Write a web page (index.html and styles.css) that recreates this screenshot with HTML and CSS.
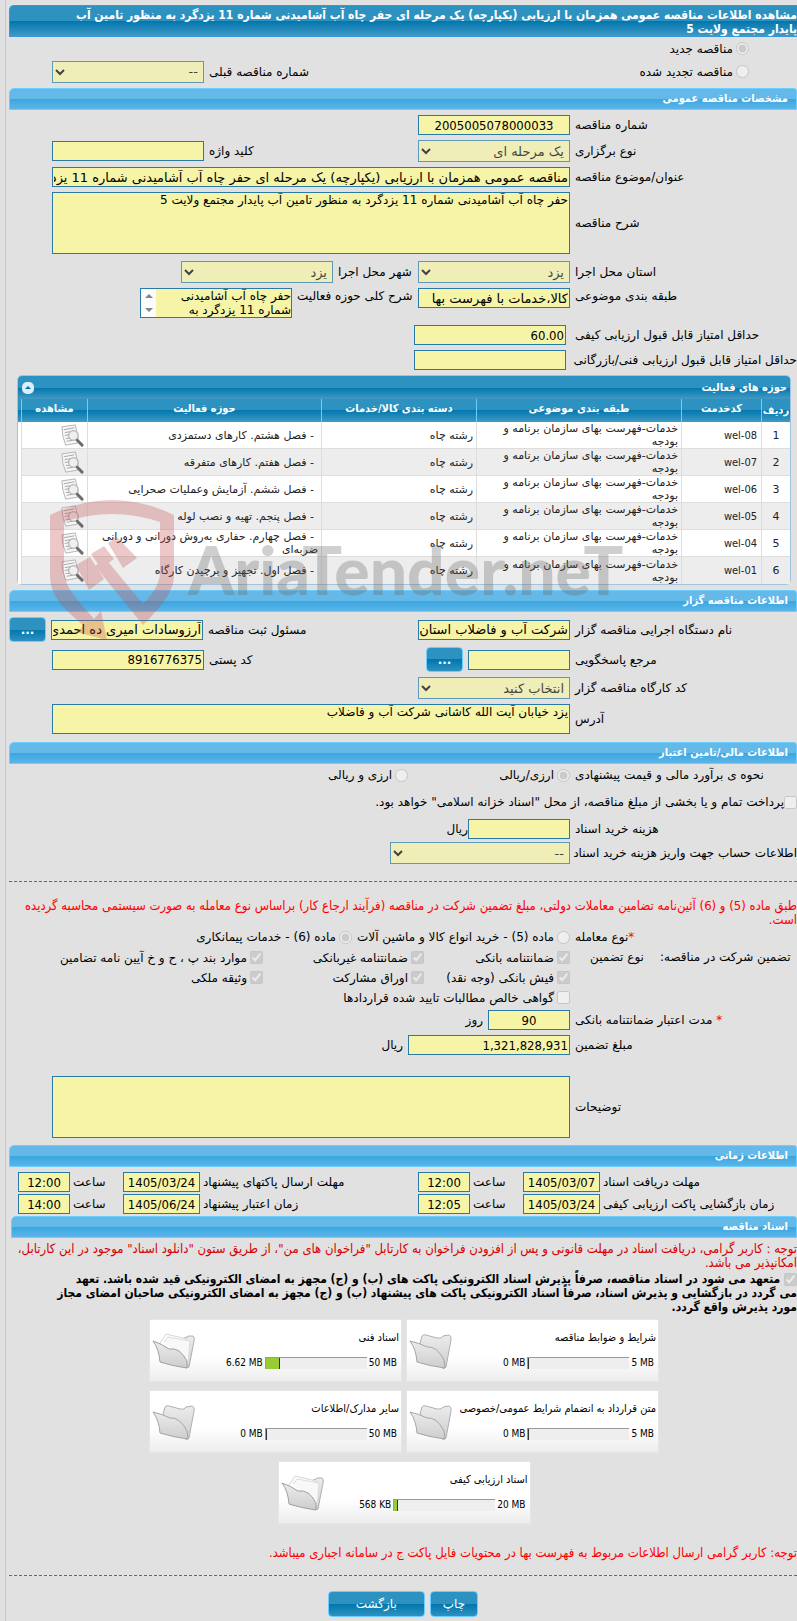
FILE: index.html
```html
<!DOCTYPE html>
<html lang="fa" dir="rtl">
<head>
  <meta charset="UTF-8" />
  <meta name="viewport" content="width=device-width, initial-scale=1.0" />
  <title>مشاهده اطلاعات مناقصه عمومی</title>
  <link rel="stylesheet" href="styles.css">
</head>
<body>
  <!-- shared icons -->
  <svg class="sprite" width="0" height="0" aria-hidden="true">
    <defs>
      <linearGradient id="fold" x1="0" y1="0" x2="0" y2="1">
        <stop offset="0" stop-color="#ececec"/><stop offset="1" stop-color="#cdcdcd"/>
      </linearGradient>
      <symbol id="view" viewBox="0 0 26 26">
        <path d="M3 4 17 2 20 16 19 21 7 23Q3 14 3 4Z" fill="#f6f6f6" stroke="#b4b4b4"/>
        <path d="M5 7 16 5M6 10 12 9M6 13 11 12M7 16 11 16M8 19 14 18" stroke="#a8a8a8" fill="none"/>
        <circle cx="15" cy="13" r="5" fill="#eeeeee" fill-opacity=".8" stroke="#a0a0a0"/>
        <path d="M19 18 24 23" stroke="#6c6c6c" stroke-width="3" stroke-linecap="round"/>
      </symbol>
      <symbol id="folder" viewBox="0 0 44 38">
        <path d="M11 10 13 3Q14 1 17 2L28 5Q33 6 34 3L40 2Q43 3 42 7L37 34Q36 36 33 35Z" fill="url(#fold)" stroke="#b0b0b0"/>
        <path d="M1 8Q10 10 18 14 28 13 35 27L36 35Q20 33 8 29 7 16 1 8Z" fill="url(#fold)" stroke="#a6a6a6"/>
      </symbol>
      <symbol id="folder-full" viewBox="0 0 44 38">
        <path d="M28 7 37 3 41 3Q43 4 42 8L37 34 34 35Z" fill="url(#fold)" stroke="#b0b0b0"/>
        <path d="M8 10 14 1 35 6 34 30 12 26Z" fill="#fdfdfd" stroke="#d6d6d6"/>
        <path d="M12 9 16 4 38 8 36 31" fill="#f8f8f8" stroke="#dddddd"/>
        <path d="M1 8Q10 11 17 16 28 14 35 28L35 35Q20 33 8 29 7 16 1 8Z" fill="url(#fold)" stroke="#a0a0a0"/>
      </symbol>
    </defs>
  </svg>

  <main class="page">
    <h1 class="title">مشاهده اطلاعات مناقصه عمومی همزمان با ارزیابی (یکپارچه) یک مرحله ای حفر چاه آب آشامیدنی شماره 11 یزدگرد به منظور تامین آب<br>پایدار مجتمع ولایت 5</h1>

    <div class="kind">
      <div class="kind-row"><input type="radio" name="kind" id="kindNew" checked disabled><label for="kindNew">مناقصه جدید</label></div>
      <div class="kind-row">
        <input type="radio" name="kind" id="kindRenew" disabled><label for="kindRenew">مناقصه تجدید شده</label>
        <label class="push" for="prevNo">شماره مناقصه قبلی</label>
        <select class="w152 tail" id="prevNo" disabled><option>--</option></select>
      </div>
    </div>

    <h2 class="bar">مشخصات مناقصه عمومی</h2>
    <div class="group">
      <div class="row">
        <label for="tenderNo">شماره مناقصه</label>
        <div class="field"><input class="w152 num center" type="text" id="tenderNo" value="2005005078000033" readonly></div>
      </div>
      <div class="row">
        <label for="holdType">نوع برگزاری</label>
        <div class="field">
          <select class="w152" id="holdType" disabled><option>یک مرحله ای</option></select>
          <label class="push" for="keyword">کلید واژه</label>
          <input class="w152 tail" type="text" id="keyword" readonly>
        </div>
      </div>
      <div class="row">
        <label for="subject">عنوان/موضوع مناقصه</label>
        <div class="field"><input class="wide tail" type="text" id="subject" value="مناقصه عمومی همزمان با ارزیابی (یکپارچه) یک مرحله ای حفر چاه آب آشامیدنی شماره 11 یزدگرد به منظور تامین آب پایدار مجتمع ولایت 5" readonly></div>
      </div>
      <div class="row">
        <label for="desc">شرح مناقصه</label>
        <div class="field"><textarea class="wide tall tail" id="desc" readonly>حفر چاه آب آشامیدنی شماره 11 یزدگرد به منظور تامین آب پایدار مجتمع ولایت 5</textarea></div>
      </div>
    </div>

    <div class="group">
      <div class="row">
        <label for="province">استان محل اجرا</label>
        <div class="field">
          <select class="w152" id="province" disabled><option>یزد</option></select>
          <label class="near" for="city">شهر محل اجرا</label>
          <select class="w152" id="city" disabled><option>یزد</option></select>
        </div>
      </div>
      <div class="row top">
        <label for="category">طبقه بندی موضوعی</label>
        <div class="field">
          <input class="w152" type="text" id="category" value="کالا،خدمات با فهرست بها" readonly>
          <label class="near far" for="scope">شرح کلی حوزه فعالیت</label>
          <div class="scrollbox w152 short">
            <textarea id="scope" readonly>حفر چاه آب آشامیدنی شماره 11 یزدگرد به منظور تامین آب پایدار مجتمع ولایت 5</textarea>
            <div class="arrows"><span class="up"></span><span class="down"></span></div>
          </div>
        </div>
      </div>
    </div>

    <div class="group inset">
      <div class="row">
        <label for="minQuality">حداقل امتیاز قابل قبول ارزیابی کیفی</label>
        <div class="field"><input class="w152 num" type="text" id="minQuality" value="60.00" readonly></div>
      </div>
      <div class="row">
        <label for="minTech">حداقل امتیاز قابل قبول ارزیابی فنی/بازرگانی</label>
        <div class="field"><input class="w152" type="text" id="minTech" readonly></div>
      </div>
    </div>

    <section class="panel">
      <header class="panel-head">
        <h3>حوزه های فعالیت</h3>
        <button type="button" class="collapse" aria-label="بستن"></button>
      </header>
      <table>
        <colgroup>
          <col class="c-no"><col class="c-code"><col class="c-cat"><col class="c-goods"><col><col class="c-view">
        </colgroup>
        <thead>
          <tr><th>ردیف</th><th>کدخدمت</th><th>طبقه بندی موضوعی</th><th>دسته بندی کالا/خدمات</th><th>حوزه فعالیت</th><th>مشاهده</th></tr>
        </thead>
        <tbody>
          <tr><td>1</td><td class="num" dir="ltr">wel-08</td><td>خدمات-فهرست بهای سازمان برنامه و<br>بودجه</td><td>رشته چاه</td><td>- فصل هشتم. کارهای دستمزدی</td><td><svg class="view"><use href="#view"/></svg></td></tr>
          <tr><td>2</td><td class="num" dir="ltr">wel-07</td><td>خدمات-فهرست بهای سازمان برنامه و<br>بودجه</td><td>رشته چاه</td><td>- فصل هفتم. کارهای متفرقه</td><td><svg class="view"><use href="#view"/></svg></td></tr>
          <tr><td>3</td><td class="num" dir="ltr">wel-06</td><td>خدمات-فهرست بهای سازمان برنامه و<br>بودجه</td><td>رشته چاه</td><td>- فصل ششم. آزمایش وعملیات صحرایی</td><td><svg class="view"><use href="#view"/></svg></td></tr>
          <tr><td>4</td><td class="num" dir="ltr">wel-05</td><td>خدمات-فهرست بهای سازمان برنامه و<br>بودجه</td><td>رشته چاه</td><td>- فصل پنجم. تهیه و نصب لوله</td><td><svg class="view"><use href="#view"/></svg></td></tr>
          <tr><td>5</td><td class="num" dir="ltr">wel-04</td><td>خدمات-فهرست بهای سازمان برنامه و<br>بودجه</td><td>رشته چاه</td><td class="two"><span class="lead">- فصل چهارم. حفاری به‌روش دورانی و دورانی</span><br>ضربه‌ای</td><td><svg class="view"><use href="#view"/></svg></td></tr>
          <tr><td>6</td><td class="num" dir="ltr">wel-01</td><td>خدمات-فهرست بهای سازمان برنامه و<br>بودجه</td><td>رشته چاه</td><td>- فصل اول. تجهیز و برچیدن کارگاه</td><td><svg class="view"><use href="#view"/></svg></td></tr>
        </tbody>
      </table>
      <div class="watermark" dir="ltr">
        <svg class="shield" viewBox="50 498 126 144">
          <path d="M50 515Q112 485 174 515V575C174 590 164 604 143 625L95 566 105 558 143 604Q160 587 160 572V522Q112 506 64 522V570C64 588 80 602 94 619L101 611 107 640 76 632 84 626C66 610 50 598 50 575Z"/>
          <path d="M76 565 90 557 104 579 89 590ZM91 554 104 546 114 559 101 568ZM108 543 117 537 137 558 123 568Z"/>
        </svg>
        <span class="brand">AriaTender.neT</span>
      </div>
    </section>

    <h2 class="bar">اطلاعات مناقصه گزار</h2>
    <div class="group agency">
      <div class="row">
        <label for="org">نام دستگاه اجرایی مناقصه گزار</label>
        <div class="field">
          <input class="w152" type="text" id="org" value="شرکت آب و فاضلاب استان یزد" readonly>
          <label class="push" for="registrar">مسئول ثبت مناقصه</label>
          <input class="w152" type="text" id="registrar" value="آرزوسادات امیری ده احمدی" readonly>
          <button type="button" class="btn more">...</button>
        </div>
      </div>
      <div class="row">
        <label for="contact">مرجع پاسخگویی</label>
        <div class="field">
          <input class="w102" type="text" id="contact" readonly>
          <button type="button" class="btn more">...</button>
          <label class="push" for="postal">کد پستی</label>
          <input class="w152 num tail" type="text" id="postal" value="8916776375" readonly>
        </div>
      </div>
      <div class="row">
        <label for="workshop">کد کارگاه مناقصه گزار</label>
        <div class="field"><select class="w152" id="workshop" disabled><option>انتخاب کنید</option></select></div>
      </div>
      <div class="row">
        <label for="address">آدرس</label>
        <div class="field"><textarea class="wide short tail" id="address" readonly>یزد خیابان آیت الله کاشانی شرکت آب و فاضلاب</textarea></div>
      </div>
    </div>

    <h2 class="bar spaced flush">اطلاعات مالی/تامین اعتبار</h2>
    <div class="group finance">
      <div class="row">
        <span class="name">نحوه ی برآورد مالی و قیمت پیشنهادی</span>
        <div class="field est">
          <span class="opt"><input type="radio" name="cur" id="curOne" checked disabled><label for="curOne">ارزی/ریالی</label></span>
          <span class="opt"><input type="radio" name="cur" id="curBoth" disabled><label for="curBoth">ارزی و ریالی</label></span>
        </div>
      </div>
      <div class="opt treasury"><input type="checkbox" id="treasury" disabled><label for="treasury">پرداخت تمام و یا بخشی از مبلغ مناقصه، از محل "اسناد خزانه اسلامی" خواهد بود.</label></div>
      <div class="row">
        <label for="docCost">هزینه خرید اسناد</label>
        <div class="field tight"><input class="w102" type="text" id="docCost" readonly><span>ریال</span></div>
      </div>
      <div class="row">
        <label for="account">اطلاعات حساب جهت واریز هزینه خرید اسناد</label>
        <div class="field"><select class="w180" id="account" disabled><option>--</option></select></div>
      </div>
    </div>

    <hr class="dash">
    <p class="note law">طبق ماده (5) و (6) آئین‌نامه تضامین معاملات دولتی، مبلغ تضمین شرکت در مناقصه (فرآیند ارجاع کار) براساس نوع معامله به صورت سیستمی محاسبه گردیده<br>است.</p>

    <div class="checks">
      <div class="row">
        <span class="name"><i>*</i>نوع معامله</span>
        <div class="field">
          <span class="opt"><input type="radio" name="deal" id="deal5" disabled><label for="deal5">ماده (5) - خرید انواع کالا و ماشین آلات</label></span>
          <span class="opt"><input type="radio" name="deal" id="deal6" checked disabled><label for="deal6">ماده (6) - خدمات پیمانکاری</label></span>
        </div>
      </div>
      <div class="row top">
        <span class="name pair"><span>تضمین شرکت در مناقصه:</span><span>نوع تضمین</span></span>
        <div class="options">
          <span class="opt"><input type="checkbox" id="g1" checked disabled><label for="g1">ضمانتنامه بانکی</label></span>
          <span class="opt"><input type="checkbox" id="g2" checked disabled><label for="g2">ضمانتنامه غیربانکی</label></span>
          <span class="opt"><input type="checkbox" id="g3" checked disabled><label for="g3">موارد بند پ ، ح و خ آیین نامه تضامین</label></span>
          <span class="opt"><input type="checkbox" id="g4" checked disabled><label for="g4">فیش بانکی (وجه نقد)</label></span>
          <span class="opt"><input type="checkbox" id="g5" checked disabled><label for="g5">اوراق مشارکت</label></span>
          <span class="opt"><input type="checkbox" id="g6" checked disabled><label for="g6">وثیقه ملکی</label></span>
          <span class="opt full"><input type="checkbox" id="g7" disabled><label for="g7">گواهی خالص مطالبات تایید شده قراردادها</label></span>
        </div>
      </div>
    </div>

    <div class="group guarantee">
      <div class="row">
        <label for="validity"><i>*</i> مدت اعتبار ضمانتنامه بانکی</label>
        <div class="field"><input class="w82 num center" type="text" id="validity" value="90" readonly><span>روز</span></div>
      </div>
      <div class="row">
        <label for="amount">مبلغ تضمین</label>
        <div class="field"><input class="w162 num" type="text" id="amount" value="1,321,828,931" readonly><span>ریال</span></div>
      </div>
    </div>
    <div class="row remarks">
      <label for="remarks">توضیحات</label>
      <div class="field"><textarea class="wide tall tail" id="remarks" readonly></textarea></div>
    </div>

    <h2 class="bar spaced">اطلاعات زمانی</h2>
    <div class="times">
      <label for="d1">مهلت دریافت اسناد</label><input class="num center" id="d1" type="text" value="1405/03/07" readonly>
      <label for="t1">ساعت</label><input class="num center" id="t1" type="text" value="12:00" readonly>
      <label for="d2">مهلت ارسال پاکتهای پیشنهاد</label><input class="num center" id="d2" type="text" value="1405/03/24" readonly>
      <label for="t2">ساعت</label><input class="num center" id="t2" type="text" value="12:00" readonly>
      <label for="d3">زمان بازگشایی پاکت ارزیابی کیفی</label><input class="num center" id="d3" type="text" value="1405/03/24" readonly>
      <label for="t3">ساعت</label><input class="num center" id="t3" type="text" value="12:05" readonly>
      <label for="d4">زمان اعتبار پیشنهاد</label><input class="num center" id="d4" type="text" value="1405/06/24" readonly>
      <label for="t4">ساعت</label><input class="num center" id="t4" type="text" value="14:00" readonly>
    </div>

    <section class="docs">
      <h2 class="bar">اسناد مناقصه</h2>
      <p class="note dark">توجه : کاربر گرامی، دریافت اسناد در مهلت قانونی و پس از افزودن فراخوان به کارتابل "فراخوان های من"، از طریق ستون "دانلود اسناد" موجود در این کارتابل،<br>امکانپذیر می باشد.</p>
      <p class="pledge"><input type="checkbox" id="pledge" checked disabled> <label for="pledge">متعهد می شود در اسناد مناقصه، صرفاً پذیرش اسناد الکترونیکی پاکت های (ب) و (ج) مجهز به امضای الکترونیکی قید شده باشد. تعهد<br>می گردد در بازگشایی و پذیرش اسناد، صرفاً اسناد الکترونیکی پاکت های پیشنهاد (ب) و (ج) مجهز به امضای الکترونیکی صاحبان امضای مجاز<br>مورد پذیرش واقع گردد.</label></p>

      <div class="cards">
        <article class="card">
          <div class="card-body"><h4>شرایط و ضوابط مناقصه</h4><div class="usage"><span dir="ltr">5 MB</span><div class="track"><div class="fill" style="width: 0%"></div></div><span dir="ltr">0 MB</span></div></div>
          <svg class="folder"><use href="#folder"/></svg>
        </article>
        <article class="card">
          <div class="card-body"><h4>اسناد فنی</h4><div class="usage"><span dir="ltr">50 MB</span><div class="track"><div class="fill" style="width: 14%"></div></div><span dir="ltr">6.62 MB</span></div></div>
          <svg class="folder"><use href="#folder-full"/></svg>
        </article>
        <article class="card">
          <div class="card-body"><h4>متن قرارداد به انضمام شرایط عمومی/خصوصی</h4><div class="usage"><span dir="ltr">5 MB</span><div class="track"><div class="fill" style="width: 0%"></div></div><span dir="ltr">0 MB</span></div></div>
          <svg class="folder"><use href="#folder"/></svg>
        </article>
        <article class="card">
          <div class="card-body"><h4>سایر مدارک/اطلاعات</h4><div class="usage"><span dir="ltr">50 MB</span><div class="track"><div class="fill" style="width: 0%"></div></div><span dir="ltr">0 MB</span></div></div>
          <svg class="folder"><use href="#folder"/></svg>
        </article>
        <article class="card">
          <div class="card-body"><h4>اسناد ارزیابی کیفی</h4><div class="usage"><span dir="ltr">20 MB</span><div class="track"><div class="fill" style="width: 4%"></div></div><span dir="ltr">568 KB</span></div></div>
          <svg class="folder"><use href="#folder-full"/></svg>
        </article>
      </div>
    </section>

    <p class="note">توجه: کاربر گرامی ارسال اطلاعات مربوط به فهرست بها در محتویات فایل پاکت ج در سامانه اجباری میباشد.</p>
    <hr class="dash">
    <div class="actions">
      <button type="button" class="btn">چاپ</button>
      <button type="button" class="btn back">بازگشت</button>
    </div>
  </main>
</body>
</html>
```

FILE: styles.css
```css
* {
  box-sizing: border-box;
}

body {
  margin: 0;
  background-color: #e1e1e1;
  color: #000;
  font-family: Tahoma, "DejaVu Sans", sans-serif;
  font-size: 12px;
  line-height: 14px;
  overflow-x: hidden;
}

h1, h2, h3, h4, p {
  margin: 0;
  font-size: 12px;
}

i {
  color: #f00;
  font-style: normal;
}

/* bold headings, notes and digits take the narrower cut */
h1, h2, h3, h4, th, .note, .pledge, .usage, .num, input.num {
  font-family: Tahoma, "DejaVu Sans Condensed", "DejaVu Sans", sans-serif;
}

.sprite {
  position: absolute;
}

.page {
  margin-left: 5px;
  padding: 5px 0 5px 3px;
  border-left: 1px solid #c8c8c8;
}

.title {
  height: 32px;
  padding-top: 2px;
  overflow: hidden;
  white-space: nowrap;
  color: #fff;
  border: 1px solid #3498db;
  border-right: 0;
  border-radius: 5px 0 0 0;
  background: linear-gradient(#2e92c0 50%, #0076ae 50%, #4299c4);
}

/* form controls */
input, select, textarea, button {
  font-family: inherit;
  margin: 0;
}

input[type="text"], textarea, select {
  padding: 0 1px;
  border: 1px solid #2a7aa8;
  border-radius: 0;
  background-color: #f6f4a6;
  color: #000;
  min-width: 0;
}

input[type="text"] {
  height: 20px;
  font-size: 13px;
}

select {
  height: 22px;
  font-size: 13px;
}

textarea {
  display: block;
  resize: none;
  font-size: 12px;
  line-height: 14px;
  overflow: hidden;
}

input[type="radio"], input[type="checkbox"] {
  width: 13px;
  height: 13px;
  flex: none;
}

.center {
  text-align: center;
}

.w82 { flex: 0 0 82px; width: 82px; }
.w102 { flex: 0 0 102px; width: 102px; }
.w152 { flex: 0 0 152px; width: 152px; }
.w162 { flex: 0 0 162px; width: 162px; }
.w180 { flex: 0 0 180px; width: 180px; }
.wide { flex: 1; }
.tall { height: 62px; }
.short { height: 30px; }
.tail { margin-left: 43px; }

.scrollbox {
  display: flex;
  border: 1px solid #2a7aa8;
}

.scrollbox textarea {
  flex: 1;
  height: 28px;
  padding: 0;
  border: 0;
}

.arrows {
  display: flex;
  flex-direction: column;
  justify-content: space-between;
  align-items: center;
  width: 15px;
  padding: 5px 0;
  background-color: #fcfcfc;
}

.up, .down {
  border: 4px solid transparent;
}

.up {
  border-top: 0;
  border-bottom-color: #858585;
}

.down {
  border-bottom: 0;
  border-top-color: #858585;
}

/* rows */
.kind-row {
  display: flex;
  align-items: center;
  gap: 3px;
  height: 23px;
  padding-right: 48px;
}

.kind-row .push {
  margin-left: 2px;
}

.bar {
  height: 22px;
  margin: 5px 0;
  padding: 3px 8px 0;
  font-size: 11px;
  line-height: 14px;
  color: #fff;
  border: 1px solid #6cceff;
  border-radius: 5px 3px 0 0;
  background: linear-gradient(#64b9e9 50%, #39a6e0 50%, #5cb5e8);
}

.bar.spaced {
  margin-top: 7px;
}

.bar.flush {
  margin-bottom: 0;
}

.group {
  display: flex;
  flex-direction: column;
  gap: 5px;
}

.group + .group {
  margin-top: 7px;
}

.agency {
  padding-bottom: 1px;
}

.row {
  display: grid;
  grid-template-columns: 222px 1fr;
  gap: 5px;
  align-items: center;
}

.row > label, .row > .name {
  text-align: left;
  white-space: nowrap;
}

.row.top, .row.top .field {
  align-items: start;
}

.row.top label {
  padding-top: 1px;
}

.field {
  display: flex;
  align-items: center;
  gap: 5px;
  min-width: 0;
}

.field label, .opt, .kind label {
  white-space: nowrap;
}

.push {
  margin-right: auto;
}

.near {
  flex: 0 0 75px;
  text-align: left;
}

.near.far {
  flex-basis: 116px;
}

.inset .field {
  padding-right: 4px;
}

.opt {
  display: flex;
  align-items: center;
  gap: 3px;
}

/* activity table */
.panel {
  position: relative;
  margin: 5px 6px 5px 8px;
  border: 1px solid #9fc4df;
  border-radius: 5px;
  background-color: #fff;
}

.panel-head {
  display: flex;
  align-items: center;
  justify-content: space-between;
  height: 23px;
  padding: 0 3px 0 4px;
  color: #fff;
  border-radius: 4px 4px 0 0;
  background: linear-gradient(#2e92c0 50%, #0076ae 50%, #4299c4);
}

.panel-head h3 {
  font-size: 11px;
}

.collapse {
  display: grid;
  place-items: center;
  width: 12px;
  height: 12px;
  padding: 0;
  border: 0;
  border-radius: 5px;
  background-color: #dceefa;
}

.collapse::before {
  content: "";
  border: 3px solid transparent;
  border-top: 0;
  border-bottom-color: #0076ae;
}

table {
  width: 100%;
  table-layout: fixed;
  border-collapse: separate;
  border-spacing: 0;
  padding-left: 3px;
  font-size: 11px;
  line-height: 13px;
  background: linear-gradient(#2e92c0 11px, #0076ae 11px, #4299c4 23px, #fff 23px);
}

.c-no { width: 29px; }
.c-code { width: 80px; }
.c-cat { width: 205px; }
.c-goods { width: 155px; }
.c-view { width: 66px; }

th {
  height: 23px;
  padding: 0 0 4px;
  color: #fff;
  white-space: nowrap;
  border-left: 1px solid #6cceff;
}

th:first-child {
  padding-bottom: 0;
}

td {
  height: 27px;
  padding: 0 3px;
  white-space: nowrap;
  text-align: right;
  color: #222;
  border-left: 1px solid #ddd;
  border-bottom: 1px solid #ddd;
}

td:first-child {
  text-align: center;
}

td:nth-child(5) {
  padding-right: 7px;
}

td.two {
  padding-right: 3px;
}

.lead {
  padding-right: 4px;
}

tbody tr:nth-child(even) {
  background-color: #ededed;
}

tbody tr:nth-child(odd) {
  background-color: #fff;
}

tbody tr:last-child td {
  border-bottom: 0;
}

.view {
  display: block;
  width: 25px;
  height: 25px;
}

/* brand mark laid over the table */
.watermark {
  position: absolute;
  left: 32px;
  top: 122px;
  display: flex;
  align-items: center;
  gap: 12px;
  opacity: .3;
  pointer-events: none;
}

.shield {
  width: 126px;
  height: 144px;
  fill: #c44d4d;
}

.brand {
  font: 900 66px/80px Lato, "Liberation Sans", sans-serif;
  color: #646464;
}

/* buttons */
.btn {
  height: 26px;
  padding: 0 12px;
  font-size: 12px;
  font-weight: bold;
  color: #fff;
  border: 1px solid #6cceff;
  border-radius: 4px;
  background: linear-gradient(#2e92c0 50%, #0076ae 50%, #2e92c0);
}

.btn.more {
  flex: 0 0 37px;
  width: 37px;
  height: 25px;
  padding: 0;
}

/* finance */
.finance {
  gap: 2px;
}

.finance .row {
  min-height: 22px;
}

.est {
  gap: 91px;
}

.field.tight {
  gap: 0;
}

.treasury {
  height: 28px;
  gap: 0;
}

.dash {
  margin: 17px 0;
  border: 0;
  border-top: 1px dashed #2a7aa8;
}

.note {
  font-size: 13px;
  color: #f00;
  white-space: nowrap;
}

.dark {
  color: #d80000;
}

.checks .row {
  min-height: 20px;
}

.pair {
  display: flex;
  justify-content: end;
  gap: 16px;
  padding: 3px 0 0 15px;
}

.options {
  display: grid;
  grid-template-columns: 146px 161px 1fr;
  grid-auto-rows: 20px;
}

.full {
  grid-column: 1 / -1;
}

.guarantee {
  margin: 3px 0 21px;
}

.times {
  display: grid;
  grid-template-columns: 194px 77px 47px 52px 1fr 77px 47px 52px;
  gap: 2px 3px;
  padding: 0 0 2px 9px;
  align-items: center;
}

.times label {
  text-align: left;
  white-space: nowrap;
}

.times input {
  width: 100%;
}

.docs {
  padding-left: 2px;
}

.docs .bar {
  margin: 0 0 4px;
}

.pledge {
  margin: 2px 0 5px;
  font-weight: bold;
  white-space: nowrap;
}

.pledge input {
  vertical-align: bottom;
}

.cards {
  display: flex;
  flex-wrap: wrap;
  justify-content: center;
  gap: 8px 4px;
  max-width: 520px;
  margin: 0 auto;
}

.card {
  display: flex;
  justify-content: space-between;
  width: 253px;
  height: 63px;
  padding: 11px 2px 0;
  border: 1px solid #e6e6e6;
  background: linear-gradient(#fff 60%, #ededed);
}

.card-body h4 {
  font-size: 11px;
  font-weight: normal;
  white-space: nowrap;
}

.usage {
  display: flex;
  align-items: center;
  gap: 2px;
  margin-top: 11px;
  padding-right: 2px;
  font-size: 10px;
}

.track {
  direction: ltr;
  width: 102px;
  height: 12px;
  background-color: #eee;
  border-top: 1px solid #999;
  border-left: 1px solid #999;
}

.fill {
  height: 100%;
  background-color: #9c3;
  border-right: 1px solid #333;
}

.folder {
  flex: none;
  width: 44px;
  height: 38px;
  margin-top: 2px;
}

.docs + .note {
  margin-top: 22px;
}

.note + .dash {
  margin: 15px 0;
}

.actions {
  display: flex;
  justify-content: center;
  gap: 5px;
}

.actions .btn {
  font-weight: normal;
}

.actions .back {
  padding: 0 27px;
}
```
